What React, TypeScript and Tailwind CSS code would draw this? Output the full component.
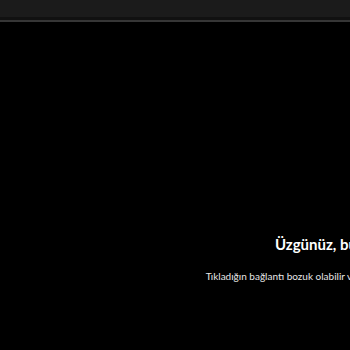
export default function App() {
  return (
    <div className="w-[350px] h-[350px] overflow-hidden bg-black" style={{ fontFamily: 'Lato, "Noto Sans", sans-serif' }}>
      <div className="h-[17px] bg-[#1b1b1b]" />
      <div className="h-[3px] bg-[#111111]" />
      <div className="h-[2px] bg-[#363636]" />
      <div className="w-[772px] pt-[212px] flex flex-col items-center text-center">
        <h2 className="text-[15px] font-bold text-white leading-[20px] whitespace-nowrap">Üzgünüz, bu sayfaya ulaşılamıyor.</h2>
        <p className="mt-[15px] text-[10px] text-[#e6e6e6] leading-[14px] whitespace-nowrap">
          Tıkladığın bağlantı bozuk olabilir veya sayfa kaldırılmış olabilir. Instagram'a geri dön.
        </p>
      </div>
    </div>
  );
}
